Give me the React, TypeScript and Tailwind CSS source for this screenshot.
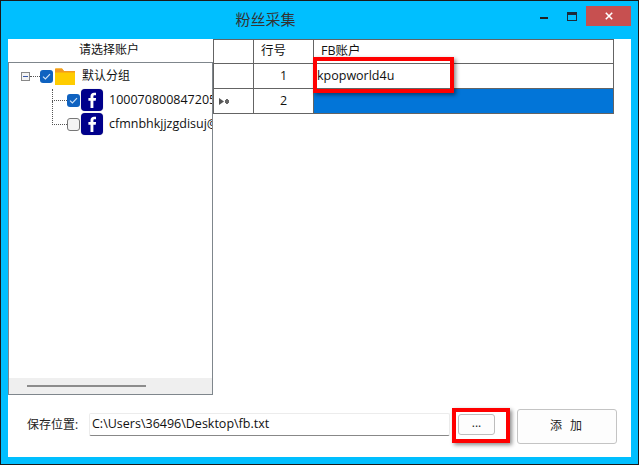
const font = { fontFamily: '"Open Sans", "Noto Sans CJK SC", sans-serif' };

function FbIcon() {
  return (
    <div className="relative h-[22px] w-[22px] shrink-0 overflow-hidden rounded-[4px] bg-[#00008b] shadow-[0_0_1px_#999]">
      <svg viewBox="0 0 22 22" className="h-full w-full">
        <path d="M12.400 19V11.800h2.300l.4-2.700h-2.700V7.500c0-.8.3-1.300 1.400-1.300H15V3.800c-.3 0-1.100-.1-2-.1-2.100 0-3.500 1.200-3.500 3.500v1.900H7.400v2.700h2.100V19z" fill="#fff" />
      </svg>
    </div>
  );
}

function Check({ checked }: { checked: boolean }) {
  if (!checked) {
    return <div className="h-[13px] w-[13px] shrink-0 rounded-[3px] border border-[#777] bg-[#f4f4f4]" />;
  }
  return (
    <div className="flex h-[13px] w-[13px] shrink-0 items-center justify-center rounded-[3px] bg-[#0f62c0]">
      <svg viewBox="0 0 13 13" className="h-[13px] w-[13px]">
        <path d="M3 6.600l2.400 2.400L10 4.200" fill="none" stroke="#cfe2f7" strokeWidth="1.200" />
      </svg>
    </div>
  );
}

function Folder() {
  return (
    <svg viewBox="0 0 20 17" className="h-[17px] w-[20px] shrink-0">
      <path d="M0 1.500C0 .8.400.5 1 .5h6L9 3h11v14H0z" fill="#ffcc00" />
      <path d="M0 1.500C0 .8.400.5 1 .5h6L9 3h11v1.600H0z" fill="#f29a1f" />
    </svg>
  );
}

function RowMarker() {
  return (
    <svg viewBox="0 0 11 7" className="h-[7px] w-[11px]">
      <path d="M0 0l5 3.500L0 7z" fill="#555" />
      <path d="M6 2h4v3H6zM7 1h2v5H7z" fill="#666" />
    </svg>
  );
}

function TreePanel() {
  return (
    <div className="flex w-[205px] shrink-0 flex-col">
      <div className="flex h-[23px] items-center justify-center pb-[1px] pr-[3px] text-[12px] text-[#111]">请选择账户</div>
      <div className="flex h-[333px] w-[205px] flex-col overflow-hidden border border-[#7f868c]">
        <div className="flex-1 pt-[1px]">
          <div className="flex h-[24px] items-center pl-[12px]">
            <div className="flex h-[9px] w-[9px] shrink-0 items-center justify-center border border-[#888] bg-[#f3f3f3]">
              <div className="h-[1px] w-[5px] bg-[#3b5aa8]" />
            </div>
            <div className="w-[10px] border-t border-dotted border-[#555]" />
            <Check checked />
            <div className="ml-[2px]"><Folder /></div>
            <span className="ml-[7px] text-[12px] text-[#111]">默认分组</span>
          </div>
          <div className="flex h-[24px] items-center pl-[43px]">
            <div className="relative w-[15px] shrink-0 border-t border-dotted border-[#555]">
              <div className="absolute bottom-0 left-0 h-[12px] border-l border-dotted border-[#555]" />
            </div>
            <Check checked />
            <div className="ml-[1px]"><FbIcon /></div>
            <span className="ml-[6px] whitespace-nowrap text-[12.500px] text-[#111]">100070800847205</span>
          </div>
          <div className="flex h-[24px] items-center pl-[43px]">
            <div className="relative w-[15px] shrink-0 border-t border-dotted border-[#555]">
              <div className="absolute bottom-0 left-0 h-[24px] border-l border-dotted border-[#555]" />
            </div>
            <Check checked={false} />
            <div className="ml-[1px]"><FbIcon /></div>
            <span className="ml-[6px] whitespace-nowrap text-[12.500px] text-[#111]">cfmnbhkjjzgdisuj@</span>
          </div>
        </div>
        <div className="flex h-[16px] items-center bg-[#efefef] pl-[18px]">
          <div className="h-[2px] w-[119px] bg-[#8c8c8c]" />
        </div>
      </div>
    </div>
  );
}

function Row({ head, num, value, selected, marker }: { head?: boolean; num: string; value: string; selected?: boolean; marker?: boolean }) {
  return (
    <div className={`flex ${head ? "h-[24px]" : "h-[25px]"} border-b border-[#646464] text-[12.500px] text-[#111]`}>
      <div className="flex w-[41px] items-center border-r border-l border-[#646464] pl-[5px]">
        {marker && <RowMarker />}
      </div>
      <div className={`flex w-[60px] items-center border-r border-[#646464] ${head ? "pl-[7px]" : "justify-center"}`}>{num}</div>
      <div className={`flex flex-1 items-center border-r border-[#646464] ${head ? "pl-[7px]" : "pl-[3px]"} ${selected ? "bg-[#0275d8]" : ""}`}>
        {value}
      </div>
    </div>
  );
}

function DataTable() {
  return (
    <div className="w-[401px] shrink-0">
      <div className="border-t border-[#646464]">
        <Row head num="行号" value="FB账户" />
        <Row num="1" value="kpopworld4u" />
        <Row num="2" value="" selected marker />
      </div>
    </div>
  );
}

function Footer() {
  return (
    <div className="flex flex-1 items-center pl-[19px] text-[12px] text-[#222]">
      <span className="mb-[3px] w-[62px] shrink-0">保存位置:</span>
      <div className="mb-[3px] flex h-[23px] w-[361px] shrink-0 items-center rounded-[2px] border border-[#ececec] border-b-[#888] pl-[2px] text-[12.500px] text-[#111]">
        C:\Users\36496\Desktop\fb.txt
      </div>
      <button className="mb-[3px] ml-[8px] flex h-[21px] w-[37px] shrink-0 items-center justify-center rounded-[3px] border border-[#bdbdbd] bg-[#fdfdfd] pb-[3px] text-[#222]">...</button>
      <button className="ml-[22px] flex h-[35px] w-[100px] shrink-0 items-center justify-center gap-[8px] rounded-[3px] border border-[#c4c4c4] bg-[#fdfdfd] pr-[2px] text-[#222]">
        <span>添</span>
        <span>加</span>
      </button>
    </div>
  );
}

export default function App() {
  return (
    <div style={font} className="relative flex h-[465px] w-[639px] flex-col overflow-hidden border border-[#1a1a1a] bg-[#00bfff]">
      <div className="flex h-[38px] shrink-0 items-center">
        <div className="flex-1 pb-[1px] pr-[10px] text-center text-[15px] text-[#333]">粉丝采集</div>
        <div className="mb-[8px] flex items-center">
          <div className="mr-[19px] mt-[4px] h-[2px] w-[8px] bg-[#222]" />
          <div className="mr-[9px] h-[9px] w-[10px] border border-t-[3px] border-[#1d2a3a]" />
          <div className="mr-[7px] flex h-[20px] w-[45px] items-center justify-center bg-[#c75050]">
            <svg viewBox="0 0 10 10" className="h-[8px] w-[8px]">
              <path d="M1 1l8 8M9 1l-8 8" stroke="#fff" strokeWidth="2" />
            </svg>
          </div>
        </div>
      </div>
      <div className="mx-[7px] flex h-[418px] flex-col bg-white">
        <div className="flex">
          <TreePanel />
          <DataTable />
        </div>
        <Footer />
      </div>
      <div className="absolute left-[312px] top-[56px] h-[36px] w-[141px] border-[4px] border-[#f00] shadow-[2px_2px_4px_rgba(0,0,0,0.45)]" />
      <div className="absolute left-[451px] top-[407px] h-[35px] w-[58px] border-[4px] border-[#f00] shadow-[2px_2px_4px_rgba(0,0,0,0.45)]" />
    </div>
  );
}
